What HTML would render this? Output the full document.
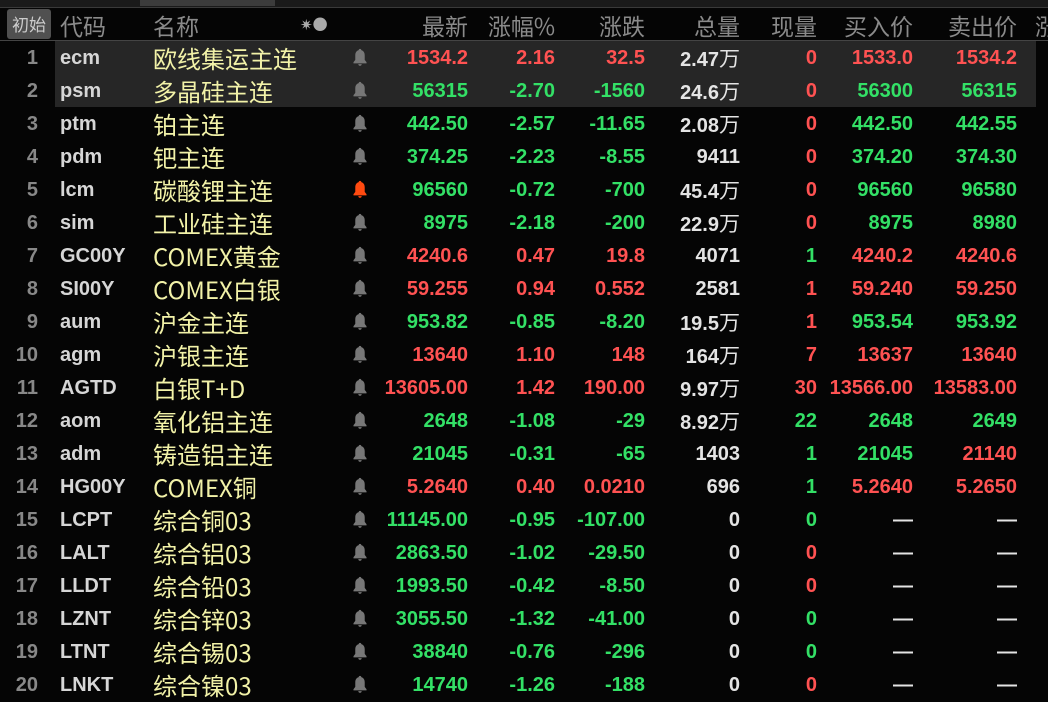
<!DOCTYPE html>
<html><head><meta charset="utf-8"><style>
body{margin:0;width:1048px;height:699px;background:#050505;overflow:hidden;position:relative;font-family:"Liberation Sans","Noto Sans CJK SC",sans-serif}
.top{position:absolute;left:0;top:0;width:1048px;height:7px;background:#1a1a1a;border-bottom:1px solid #3a3a3a}
.tab{position:absolute;top:0;left:140px;width:135px;height:6px;background:#3c3c3c}
.hdr{position:absolute;top:8px;left:0;width:1048px;height:32px;border-bottom:1px solid #444}
.h{position:absolute;top:1px;font-size:23px;color:#8a8a8a;line-height:32px;font-family:"Noto Sans CJK SC",sans-serif;white-space:nowrap}
.btn{position:absolute;left:7px;top:9px;width:44px;height:30px;background:#505050;border-radius:3px;color:#ccc;font-size:17px;line-height:30px;text-align:center;font-family:"Noto Sans CJK SC",sans-serif}
.row{position:absolute;left:0;width:1048px;height:33px;line-height:33px}
.row.hl::before{content:"";position:absolute;left:55px;right:12px;top:0;bottom:0;background:#262626}
.c{position:absolute;top:1px;font-size:20px;font-weight:bold;white-space:nowrap}
.i{right:1010px;color:#888;font-weight:bold}
.code{left:60px;color:#d6d6d6}
.nm{left:153px;top:0;color:#f2f2a8;font-size:24px;font-weight:normal;font-family:"Noto Sans CJK SC",sans-serif}
.b{left:351px;top:7px;width:18px;height:18px}
.r{color:#ff5252}.g{color:#33e066}.w{color:#e4e4e4}
.p1{right:580px}.p2{right:493px}.p3{right:403px}.p4{right:308px}.p5{right:231px}.p6{right:135px}.p7{right:31px}
.wan{font-weight:normal;font-family:"Noto Sans CJK SC",sans-serif;font-size:21px}
</style></head><body>
<div class="top"><div class="tab"></div></div>
<div class="hdr">
<div class="h" style="left:60px">代码</div>
<div class="h" style="left:153px">名称</div>
<div class="h" style="left:300px;font-size:15px;color:#aaa">✷●</div>
<div class="h" style="right:580px">最新</div>
<div class="h" style="right:493px">涨幅%</div>
<div class="h" style="right:403px">涨跌</div>
<div class="h" style="right:308px">总量</div>
<div class="h" style="right:231px">现量</div>
<div class="h" style="right:135px">买入价</div>
<div class="h" style="right:31px">卖出价</div>
<div class="h" style="left:1035px">涨</div>
</div>
<div class="btn">初始</div>

<svg width="0" height="0" style="position:absolute"><defs><symbol id="bell" viewBox="0 0 16 16"><path d="M8 0.8c.9 0 1.1.6 1.1 1.1 2.1.6 3.1 2.2 3.1 4.8v3.8l1.6 2.2v1h-11.6v-1l1.6-2.2V6.7c0-2.6 1-4.2 3.1-4.8 0-.5.2-1.1 1.1-1.1z M6.5 14.3h3c0 .9-.7 1.5-1.5 1.5s-1.5-.6-1.5-1.5z"/></symbol></defs></svg>

<div class="row hl" style="top:41px"><span class="c i">1</span><span class="c code">ecm</span><span class="c nm">欧线集运主连</span><svg class="c b" fill="#777"><use href="#bell"/></svg><span class="c p1 r">1534.2</span><span class="c p2 r">2.16</span><span class="c p3 r">32.5</span><span class="c p4 w">2.47<span class="wan">万</span></span><span class="c p5 r">0</span><span class="c p6 r">1533.0</span><span class="c p7 r">1534.2</span></div>
<div class="row hl" style="top:74px"><span class="c i">2</span><span class="c code">psm</span><span class="c nm">多晶硅主连</span><svg class="c b" fill="#777"><use href="#bell"/></svg><span class="c p1 g">56315</span><span class="c p2 g">-2.70</span><span class="c p3 g">-1560</span><span class="c p4 w">24.6<span class="wan">万</span></span><span class="c p5 r">0</span><span class="c p6 g">56300</span><span class="c p7 g">56315</span></div>
<div class="row" style="top:107px"><span class="c i">3</span><span class="c code">ptm</span><span class="c nm">铂主连</span><svg class="c b" fill="#777"><use href="#bell"/></svg><span class="c p1 g">442.50</span><span class="c p2 g">-2.57</span><span class="c p3 g">-11.65</span><span class="c p4 w">2.08<span class="wan">万</span></span><span class="c p5 r">0</span><span class="c p6 g">442.50</span><span class="c p7 g">442.55</span></div>
<div class="row" style="top:140px"><span class="c i">4</span><span class="c code">pdm</span><span class="c nm">钯主连</span><svg class="c b" fill="#777"><use href="#bell"/></svg><span class="c p1 g">374.25</span><span class="c p2 g">-2.23</span><span class="c p3 g">-8.55</span><span class="c p4 w">9411</span><span class="c p5 r">0</span><span class="c p6 g">374.20</span><span class="c p7 g">374.30</span></div>
<div class="row" style="top:173px"><span class="c i">5</span><span class="c code">lcm</span><span class="c nm">碳酸锂主连</span><svg class="c b" fill="#ff4a10"><use href="#bell"/></svg><span class="c p1 g">96560</span><span class="c p2 g">-0.72</span><span class="c p3 g">-700</span><span class="c p4 w">45.4<span class="wan">万</span></span><span class="c p5 r">0</span><span class="c p6 g">96560</span><span class="c p7 g">96580</span></div>
<div class="row" style="top:206px"><span class="c i">6</span><span class="c code">sim</span><span class="c nm">工业硅主连</span><svg class="c b" fill="#777"><use href="#bell"/></svg><span class="c p1 g">8975</span><span class="c p2 g">-2.18</span><span class="c p3 g">-200</span><span class="c p4 w">22.9<span class="wan">万</span></span><span class="c p5 r">0</span><span class="c p6 g">8975</span><span class="c p7 g">8980</span></div>
<div class="row" style="top:239px"><span class="c i">7</span><span class="c code">GC00Y</span><span class="c nm">COMEX黄金</span><svg class="c b" fill="#777"><use href="#bell"/></svg><span class="c p1 r">4240.6</span><span class="c p2 r">0.47</span><span class="c p3 r">19.8</span><span class="c p4 w">4071</span><span class="c p5 g">1</span><span class="c p6 r">4240.2</span><span class="c p7 r">4240.6</span></div>
<div class="row" style="top:272px"><span class="c i">8</span><span class="c code">SI00Y</span><span class="c nm">COMEX白银</span><svg class="c b" fill="#777"><use href="#bell"/></svg><span class="c p1 r">59.255</span><span class="c p2 r">0.94</span><span class="c p3 r">0.552</span><span class="c p4 w">2581</span><span class="c p5 r">1</span><span class="c p6 r">59.240</span><span class="c p7 r">59.250</span></div>
<div class="row" style="top:305px"><span class="c i">9</span><span class="c code">aum</span><span class="c nm">沪金主连</span><svg class="c b" fill="#777"><use href="#bell"/></svg><span class="c p1 g">953.82</span><span class="c p2 g">-0.85</span><span class="c p3 g">-8.20</span><span class="c p4 w">19.5<span class="wan">万</span></span><span class="c p5 r">1</span><span class="c p6 g">953.54</span><span class="c p7 g">953.92</span></div>
<div class="row" style="top:338px"><span class="c i">10</span><span class="c code">agm</span><span class="c nm">沪银主连</span><svg class="c b" fill="#777"><use href="#bell"/></svg><span class="c p1 r">13640</span><span class="c p2 r">1.10</span><span class="c p3 r">148</span><span class="c p4 w">164<span class="wan">万</span></span><span class="c p5 r">7</span><span class="c p6 r">13637</span><span class="c p7 r">13640</span></div>
<div class="row" style="top:371px"><span class="c i">11</span><span class="c code">AGTD</span><span class="c nm">白银T+D</span><svg class="c b" fill="#777"><use href="#bell"/></svg><span class="c p1 r">13605.00</span><span class="c p2 r">1.42</span><span class="c p3 r">190.00</span><span class="c p4 w">9.97<span class="wan">万</span></span><span class="c p5 r">30</span><span class="c p6 r">13566.00</span><span class="c p7 r">13583.00</span></div>
<div class="row" style="top:404px"><span class="c i">12</span><span class="c code">aom</span><span class="c nm">氧化铝主连</span><svg class="c b" fill="#777"><use href="#bell"/></svg><span class="c p1 g">2648</span><span class="c p2 g">-1.08</span><span class="c p3 g">-29</span><span class="c p4 w">8.92<span class="wan">万</span></span><span class="c p5 g">22</span><span class="c p6 g">2648</span><span class="c p7 g">2649</span></div>
<div class="row" style="top:437px"><span class="c i">13</span><span class="c code">adm</span><span class="c nm">铸造铝主连</span><svg class="c b" fill="#777"><use href="#bell"/></svg><span class="c p1 g">21045</span><span class="c p2 g">-0.31</span><span class="c p3 g">-65</span><span class="c p4 w">1403</span><span class="c p5 g">1</span><span class="c p6 g">21045</span><span class="c p7 r">21140</span></div>
<div class="row" style="top:470px"><span class="c i">14</span><span class="c code">HG00Y</span><span class="c nm">COMEX铜</span><svg class="c b" fill="#777"><use href="#bell"/></svg><span class="c p1 r">5.2640</span><span class="c p2 r">0.40</span><span class="c p3 r">0.0210</span><span class="c p4 w">696</span><span class="c p5 g">1</span><span class="c p6 r">5.2640</span><span class="c p7 r">5.2650</span></div>
<div class="row" style="top:503px"><span class="c i">15</span><span class="c code">LCPT</span><span class="c nm">综合铜03</span><svg class="c b" fill="#777"><use href="#bell"/></svg><span class="c p1 g">11145.00</span><span class="c p2 g">-0.95</span><span class="c p3 g">-107.00</span><span class="c p4 w">0</span><span class="c p5 g">0</span><span class="c p6 w">—</span><span class="c p7 w">—</span></div>
<div class="row" style="top:536px"><span class="c i">16</span><span class="c code">LALT</span><span class="c nm">综合铝03</span><svg class="c b" fill="#777"><use href="#bell"/></svg><span class="c p1 g">2863.50</span><span class="c p2 g">-1.02</span><span class="c p3 g">-29.50</span><span class="c p4 w">0</span><span class="c p5 r">0</span><span class="c p6 w">—</span><span class="c p7 w">—</span></div>
<div class="row" style="top:569px"><span class="c i">17</span><span class="c code">LLDT</span><span class="c nm">综合铅03</span><svg class="c b" fill="#777"><use href="#bell"/></svg><span class="c p1 g">1993.50</span><span class="c p2 g">-0.42</span><span class="c p3 g">-8.50</span><span class="c p4 w">0</span><span class="c p5 r">0</span><span class="c p6 w">—</span><span class="c p7 w">—</span></div>
<div class="row" style="top:602px"><span class="c i">18</span><span class="c code">LZNT</span><span class="c nm">综合锌03</span><svg class="c b" fill="#777"><use href="#bell"/></svg><span class="c p1 g">3055.50</span><span class="c p2 g">-1.32</span><span class="c p3 g">-41.00</span><span class="c p4 w">0</span><span class="c p5 g">0</span><span class="c p6 w">—</span><span class="c p7 w">—</span></div>
<div class="row" style="top:635px"><span class="c i">19</span><span class="c code">LTNT</span><span class="c nm">综合锡03</span><svg class="c b" fill="#777"><use href="#bell"/></svg><span class="c p1 g">38840</span><span class="c p2 g">-0.76</span><span class="c p3 g">-296</span><span class="c p4 w">0</span><span class="c p5 g">0</span><span class="c p6 w">—</span><span class="c p7 w">—</span></div>
<div class="row" style="top:668px"><span class="c i">20</span><span class="c code">LNKT</span><span class="c nm">综合镍03</span><svg class="c b" fill="#777"><use href="#bell"/></svg><span class="c p1 g">14740</span><span class="c p2 g">-1.26</span><span class="c p3 g">-188</span><span class="c p4 w">0</span><span class="c p5 r">0</span><span class="c p6 w">—</span><span class="c p7 w">—</span></div>
</body></html>
